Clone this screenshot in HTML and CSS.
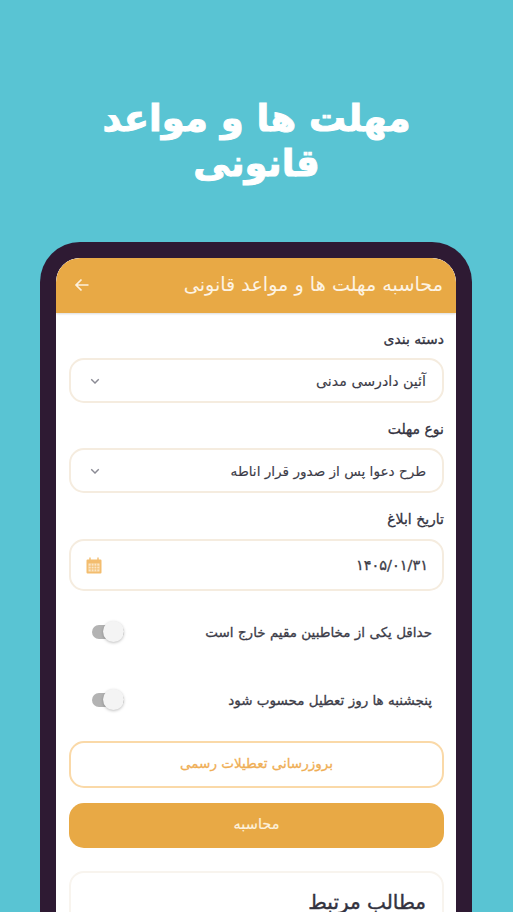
FILE: index.html
```html
<!DOCTYPE html>
<html lang="fa" dir="rtl">
<head>
<meta charset="utf-8">
<title>مهلت ها و مواعد قانونی</title>
<link rel="stylesheet" href="styles.css">
</head>
<body>
<div class="page">
  <h1 class="headline">مهلت ها و مواعد<br>قانونی</h1>
  <div class="phone">
    <div class="screen">
      <header class="appbar">
        <span class="appbar-title">محاسبه مهلت ها و مواعد قانونی</span>
        <svg class="back" viewBox="0 0 16 16" width="16" height="16"><path d="M14.5 8H2M7.5 2.5 2 8l5.5 5.5" fill="none" stroke="#fdf1dc" stroke-width="1.7"/></svg>
      </header>
      <main class="form">
        <div class="label">دسته بندی</div>
        <div class="field select">
          <span>آئین دادرسی مدنی</span>
          <svg class="chev" viewBox="0 0 12 12" width="10" height="10"><path d="M1.5 4l4.5 4.5L10.5 4" fill="none" stroke="#8a8a94" stroke-width="1.7"/></svg>
        </div>
        <div class="label l2">نوع مهلت</div>
        <div class="field select">
          <span class="compact">طرح دعوا پس از صدور قرار اناطه</span>
          <svg class="chev" viewBox="0 0 12 12" width="10" height="10"><path d="M1.5 4l4.5 4.5L10.5 4" fill="none" stroke="#8a8a94" stroke-width="1.7"/></svg>
        </div>
        <div class="label l2">تاریخ ابلاغ</div>
        <div class="field date">
          <span>۱۴۰۵/۰۱/۳۱</span>
          <svg class="cal" viewBox="0 0 16 17" width="16" height="17">
            <path d="M1.5 2.5h13a1 1 0 0 1 1 1v12a1 1 0 0 1-1 1h-13a1 1 0 0 1-1-1v-12a1 1 0 0 1 1-1z" fill="#f3bd6f"/>
            <path d="M4 .5v3M12 .5v3" stroke="#f3bd6f" stroke-width="1.4"/>
            <path d="M2.5 6.5h11v8h-11z" fill="#fbe6c6"/>
            <path d="M2.5 9.2h11M2.5 11.9h11M5.2 6.5v8M8 6.5v8M10.8 6.5v8" stroke="#f3bd6f" stroke-width=".8"/>
          </svg>
        </div>
        <div class="toggle-row first">
          <span>حداقل یکی از مخاطبین مقیم خارج است</span>
          <span class="switch"><span class="knob"></span></span>
        </div>
        <div class="toggle-row">
          <span>پنجشنبه ها روز تعطیل محسوب شود</span>
          <span class="switch"><span class="knob"></span></span>
        </div>
        <button class="btn outline">بروزرسانی تعطیلات رسمی</button>
        <button class="btn solid">محاسبه</button>
        <section class="card"><h2>مطالب مرتبط</h2></section>
      </main>
    </div>
  </div>
</div>
</body>
</html>
```

FILE: styles.css
```css
* { box-sizing: border-box; }
html, body { margin: 0; height: 100%; overflow: hidden; }
body { background: #59c4d3; font-family: "DejaVu Sans", "Noto Sans", sans-serif; }
.page { height: 912px; overflow: hidden; padding-top: 96px; direction: ltr; }
.headline {
  direction: rtl; margin: 0; height: 146px; text-align: center; color: #fff;
  font-size: 37px; line-height: 45px; font-weight: 700; -webkit-text-stroke: 1px #fff;
}
.phone {
  direction: rtl; width: 432px; height: 800px; margin: 0 0 0 40px;
  border: 16px solid #2e1a33; border-bottom: 0;
  border-radius: 40px 40px 0 0; background: #fff; overflow: hidden;
}
.screen { border-radius: 24px 24px 0 0; overflow: hidden; background: #fff; height: 100%; }
.appbar {
  height: 55px; background: #e8a945; display: flex; align-items: center;
  justify-content: space-between; padding: 0 13px 2px 18px;
  box-shadow: 0 1px 2px rgba(0,0,0,.15); position: relative;
}
.appbar-title { color: #fdf3e3; font-size: 19.2px; }
.back { display: block; }
.form { padding: 16px 12px 0 13px; }
.label { font-size: 14px; line-height: 20px; color: #33333f; height: 20px; margin-bottom: 9px; -webkit-text-stroke: .3px #33333f; }
.label.l2 { margin-top: 16px; }
.field {
  display: flex; align-items: center; justify-content: space-between;
  background: #fff; border: 2px solid #f5ecdf; border-radius: 15px;
  color: #3c3c48; font-size: 14.2px; -webkit-text-stroke: .15px #3c3c48;
}
.compact { font-size: 13.6px; }
.select { height: 45px; padding: 0 16px 0 19px; }
.date { height: 52px; padding: 0 14px 0 15px; margin-top: 10px; }
.date span { font-size: 14.5px; -webkit-text-stroke: .3px #3c3c48; }
.chev, .cal { display: block; }
.toggle-row {
  display: flex; align-items: center; justify-content: space-between;
  height: 40px; margin-top: 28px; padding: 0 12px 0 23px;
  font-size: 13.5px; color: #3c3c48; -webkit-text-stroke: .3px #3c3c48;
}
.toggle-row.first { margin-top: 21px; }
.switch { display: block; position: relative; width: 32px; height: 14px; border-radius: 7px; background: #b3b3b3; }
.knob {
  position: absolute; left: 11px; top: -4px; width: 21px; height: 21px; border-radius: 50%;
  background: #f4f4f4; box-shadow: 0 1px 3px rgba(0,0,0,.25);
}
.btn {
  display: block; width: 100%; font-family: inherit; font-size: 13.5px;
  border-radius: 15px; cursor: pointer; padding: 0 0 3px;
}
.outline { height: 47px; margin-top: 21px; background: #fff; border: 2px solid #fad9a8; color: #efae55; -webkit-text-stroke: .3px #efae55; }
.solid { height: 45px; margin-top: 15px; background: #e8a945; border: 0; color: #fdf1dc; font-size: 14.5px; -webkit-text-stroke: .2px #fdf1dc; }
.card {
  height: 80px; margin-top: 23px; border: 2px solid #f8f4ee; border-radius: 15px; padding: 14px 16px;
}
.card h2 { margin: 0; font-size: 20px; line-height: 30px; font-weight: 400; color: #33333f; -webkit-text-stroke: .4px #33333f; }
```
